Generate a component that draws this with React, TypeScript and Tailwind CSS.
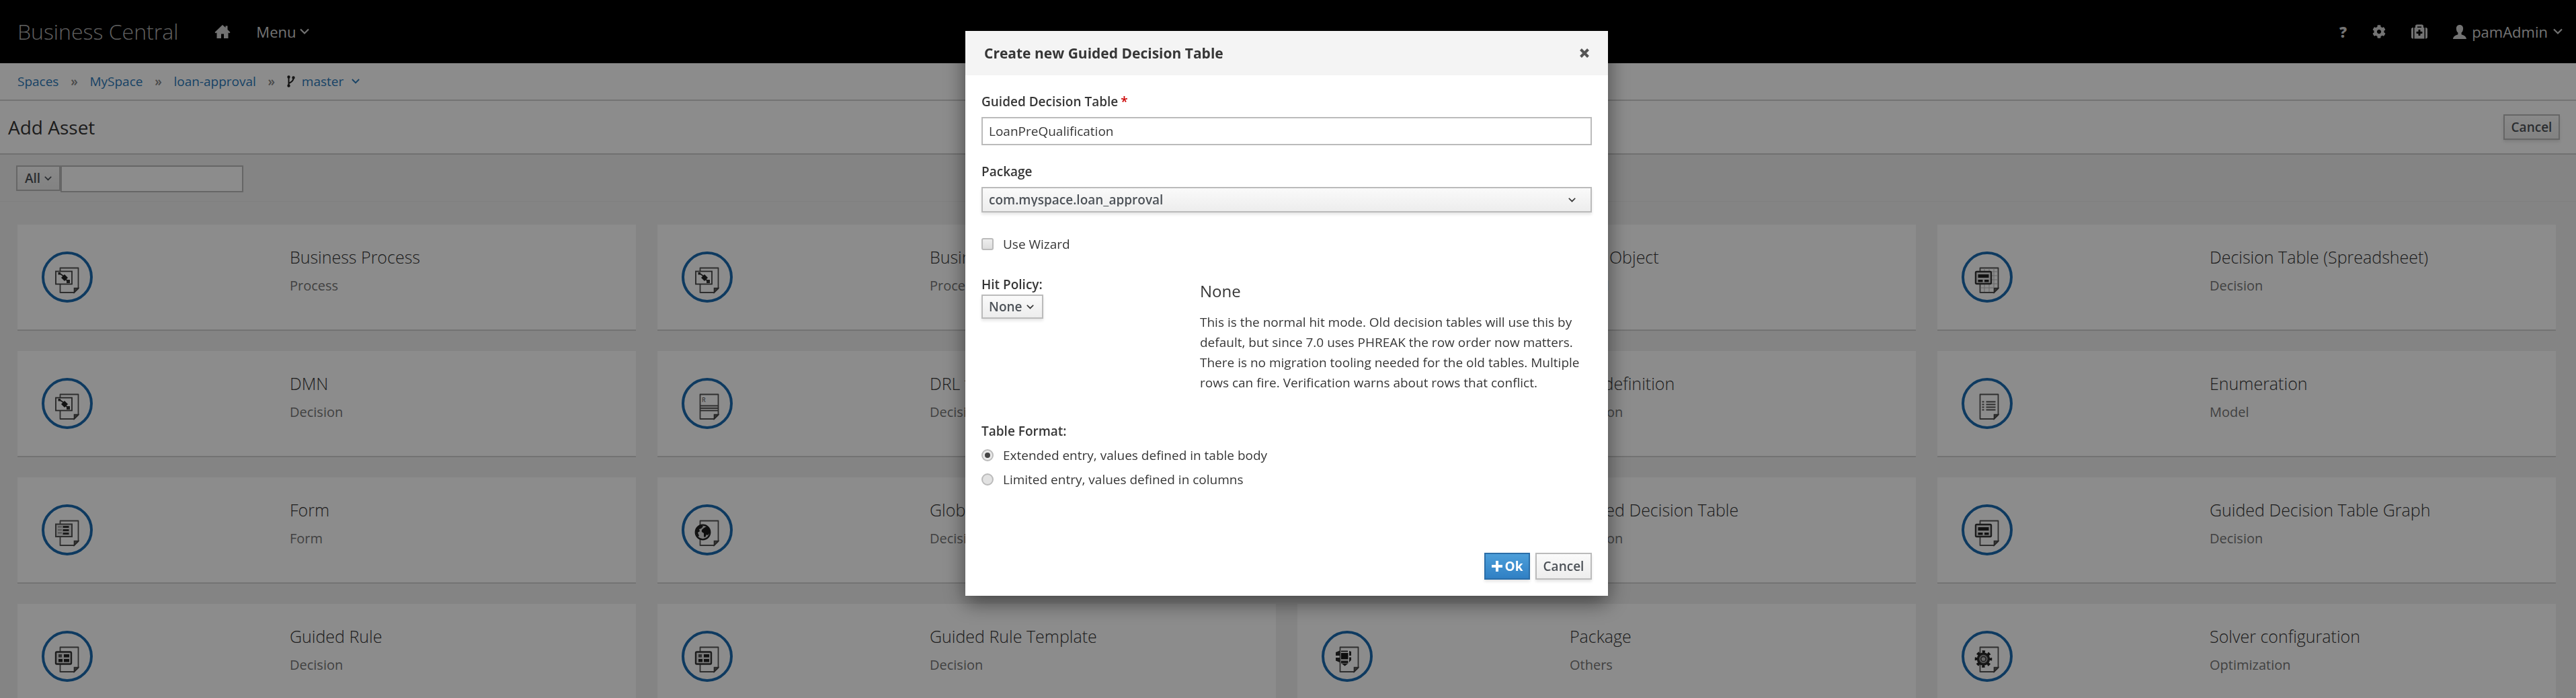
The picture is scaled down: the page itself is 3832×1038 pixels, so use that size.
import type { ReactNode } from 'react';
import { FaCog, FaMedkit } from 'react-icons/fa';

type IconKind = 'process' | 'rule' | 'table' | 'sheet' | 'list' | 'drl' | 'form' | 'globe' | 'package' | 'gear';

const assets: { title: string; kind: string; icon: IconKind }[] = [
  { title: 'Business Process', kind: 'Process', icon: 'process' },
  { title: 'Business Process (legacy)', kind: 'Process', icon: 'process' },
  { title: 'Data Object', kind: 'Model', icon: 'list' },
  { title: 'Decision Table (Spreadsheet)', kind: 'Decision', icon: 'sheet' },
  { title: 'DMN', kind: 'Decision', icon: 'process' },
  { title: 'DRL file', kind: 'Decision', icon: 'drl' },
  { title: 'DSL definition', kind: 'Decision', icon: 'drl' },
  { title: 'Enumeration', kind: 'Model', icon: 'list' },
  { title: 'Form', kind: 'Form', icon: 'form' },
  { title: 'Global Variable(s)', kind: 'Decision', icon: 'globe' },
  { title: 'Guided Decision Table', kind: 'Decision', icon: 'table' },
  { title: 'Guided Decision Table Graph', kind: 'Decision', icon: 'table' },
  { title: 'Guided Rule', kind: 'Decision', icon: 'rule' },
  { title: 'Guided Rule Template', kind: 'Decision', icon: 'rule' },
  { title: 'Package', kind: 'Others', icon: 'package' },
  { title: 'Solver configuration', kind: 'Optimization', icon: 'gear' },
];

const glyphs: Record<IconKind, ReactNode> = {
  process: (
    <>
      <rect x="21" y="29.5" width="24" height="19" fill="#fff" stroke="#444" strokeWidth="1.8" />
      <path d="M26 32 33 37M34 40 40 45" stroke="#333" strokeWidth="1.8" />
      <rect x="24.5" y="31" width="3.5" height="3.5" fill="#333" />
      <path d="M34 34 39 39 34 44 29 39Z" fill="#222" />
      <rect x="37" y="42" width="5" height="5" fill="#333" />
    </>
  ),
  rule: (
    <>
      <rect x="21" y="31.5" width="23" height="18" rx="1.5" fill="#ddd" stroke="#333" strokeWidth="2.4" />
      <rect x="25" y="35" width="5" height="4.5" fill="#555" />
      <rect x="33" y="35" width="8" height="4.5" fill="#222" />
      <rect x="25" y="42" width="6" height="4.5" fill="#222" />
      <rect x="33" y="42" width="8" height="4.5" fill="#222" />
    </>
  ),
  table: (
    <>
      <rect x="21" y="30" width="23" height="18" rx="1.5" fill="#ddd" stroke="#333" strokeWidth="2.4" />
      <rect x="24.5" y="34" width="16" height="5" fill="#222" />
      <rect x="24.5" y="42" width="7" height="3.5" fill="#222" />
      <rect x="34" y="42" width="6.5" height="3.5" fill="#222" />
    </>
  ),
  sheet: (
    <>
      <path d="M28 30H54M28 36H54M28 42H54M28 48H54M28 54H48M34 25V60M41 25V60M48 25V54" stroke="#bbb" strokeWidth="1" />
      <rect x="21" y="30" width="23" height="18" rx="1.5" fill="#ddd" stroke="#333" strokeWidth="2.4" />
      <rect x="24.5" y="34" width="16" height="5" fill="#222" />
      <rect x="24.5" y="42" width="7" height="3.5" fill="#222" />
      <rect x="34" y="42" width="6.5" height="3.5" fill="#222" />
    </>
  ),
  list: (
    <path
      d="M30.5 35.5h3M30.5 39.5h3M30.5 43.5h3M30.5 47.5h3M36.5 35.5h14M36.5 39.5h14M36.5 43.5h14M36.5 47.5h14"
      stroke="#555"
      strokeWidth="2"
    />
  ),
  drl: (
    <>
      <text x="30" y="36" fontSize="9" fontFamily="Open Sans" fill="#444">R</text>
      <path d="M28 41.5H54M28 45H54M28 48.5H54" stroke="#555" strokeWidth="1.8" />
    </>
  ),
  form: (
    <>
      <rect x="21" y="29.5" width="24" height="18.5" fill="#ddd" stroke="#555" strokeWidth="2" />
      <path d="M24 33.5h6M24 38h6M24 42.5h6" stroke="#888" strokeWidth="1.5" />
      <path d="M31.5 33.5h9M31.5 38.5h9M31.5 43.5h9" stroke="#333" strokeWidth="3" />
    </>
  ),
  globe: (
    <>
      <circle cx="31.5" cy="41.5" r="10.8" fill="#ddd" stroke="#222" strokeWidth="2.2" />
      <path d="M22 38q2-6 8-7l2 2-3 3-3 1 1 3-3 2 2 5-2 1q-3-4-2-10Z" fill="#222" />
      <path d="M32 36q3-3 7-3 3 3 3 9l-3 4-2-1-2 4-2-1 0-5-3-2q-1-3 2-5Z" fill="#1a1a1a" />
    </>
  ),
  package: (
    <>
      <path d="M21 32l6-2.5v7.5h-6ZM21 40h6v7l-6-2.5ZM30 49h9l-4.500 3.500ZM41 30l3 1v6h-3ZM41 39.500h3v4l-3 3.500Z" fill="#2a2a2a" />
      <path d="M29 30.500h10" stroke="#2a2a2a" strokeWidth="1.800" />
      <rect x="29" y="33" width="10.500" height="9.500" fill="#1a1a1a" />
      <rect x="29" y="44.500" width="10.500" height="4" fill="#2a2a2a" />
    </>
  ),
  gear: (
    <>
      <circle cx="32.500" cy="42" r="8" fill="#999" stroke="#2a2a2a" strokeWidth="3.500" />
      <circle cx="32.500" cy="42" r="10.800" fill="none" stroke="#222" strokeWidth="4" strokeDasharray="4.200 4.282" strokeDashoffset="2.100" />
      <circle cx="32.500" cy="42" r="3.600" fill="#bbb" stroke="#333" strokeWidth="1.500" />
    </>
  ),
};

function AssetIcon({ kind }: { kind: IconKind }) {
  return (
    <svg viewBox="0 0 76 76" fill="none" className="size-[76px] shrink-0" aria-hidden="true">
      <circle cx="38" cy="38" r="36" stroke="#1a6aaf" strokeWidth="4" />
      <path d="M27.5 24.5H54.5V55L48 61H27.5Z" stroke="#555" strokeWidth="1.8" strokeLinejoin="round" />
      <path d="M54.5 54.5H48.5V61Z" fill="#666" stroke="#444" strokeWidth="1.6" />
      {glyphs[kind]}
    </svg>
  );
}

function Caret({ className }: { className: string }) {
  return (
    <svg viewBox="0 0 14 14" className={className} fill="none" stroke="currentColor" strokeWidth="2.2" aria-hidden="true">
      <path d="M1 3.500 7 9.500 13 3.500" />
    </svg>
  );
}

function HomeIcon() {
  return (
    <svg viewBox="0 0 24 20" className="h-5 w-6" fill="currentColor" aria-hidden="true">
      <path d="M12 0 16.500 4V1.500H19.500V7L23.500 11 22 12.500 20.500 11.500V20H14V13.500H10V20H3.500V11.500L2 12.500.5 11Z" />
    </svg>
  );
}

function UserIcon() {
  return (
    <svg viewBox="0 0 20 21" className="h-[21px] w-5" fill="currentColor" aria-hidden="true">
      <path d="M10 0C13.300 0 15.300 2.300 15.100 5.800 15 8.500 14.200 10.300 12.600 11.500V14.300C16 15.600 19.500 16.500 20 21H0C.5 16.500 4 15.600 7.400 14.300V11.500C5.800 10.300 5 8.500 4.900 5.800 4.700 2.300 6.700 0 10 0Z" />
    </svg>
  );
}

function BranchIcon() {
  return (
    <svg viewBox="0 0 12 18" className="h-[18px] w-3" fill="none" stroke="#222" strokeWidth="2" aria-hidden="true">
      <path d="M2.500 2V16M2.500 12Q9.500 9 9.500 4" />
      <circle cx="2.500" cy="2.500" r="1.200" />
      <circle cx="2.500" cy="15.500" r="1.200" />
      <circle cx="9.500" cy="3.500" r="1.200" />
    </svg>
  );
}

const buttonLook = 'border-2 border-[#bbb] bg-linear-to-b from-[#fafafa] to-[#ededed] text-[19px] font-semibold text-[#4d5258]';
const dropShadow = 'shadow-[0_3px_4px_rgba(0,0,0,0.1)]';

function TopBar() {
  return (
    <header className="flex h-[94px] items-center justify-between bg-black pr-5 pl-[26px] text-[22px] text-[#d1d1d1]">
      <div className="flex items-center">
        <a href="#" className="mr-[54px] text-[32px] font-light text-[#b0b0b0]">Business Central</a>
        <a href="#" aria-label="Home" className="mr-[38px]"><HomeIcon /></a>
        <button type="button" className="flex items-center gap-1.5">Menu <Caret className="size-[14px]" /></button>
      </div>
      <div className="flex items-center gap-[38px]">
        <button type="button" aria-label="Help" className="font-extrabold">?</button>
        <button type="button" aria-label="Settings"><FaCog className="size-5" /></button>
        <button type="button" aria-label="Support"><FaMedkit className="size-6" /></button>
        <button type="button" className="flex items-center gap-2">
          <UserIcon />
          <span>pamAdmin</span>
          <Caret className="size-[14px]" />
        </button>
      </div>
    </header>
  );
}

function Breadcrumb() {
  const links = ['Spaces', 'MySpace', 'loan-approval'];
  return (
    <nav aria-label="Breadcrumb" className="flex h-14 items-center border-b-2 border-[#d1d1d1] bg-white pl-[26px] text-[19px] text-[#2b79b9]">
      {links.map((link) => (
        <span key={link} className="flex items-center">
          <a href="#">{link}</a>
          <span className="w-[46px] text-center font-semibold text-[#888]">»</span>
        </span>
      ))}
      <BranchIcon />
      <button type="button" className="ml-2.5 flex items-center gap-3">master <Caret className="size-3" /></button>
    </nav>
  );
}

function NewTableDialog() {
  return (
    <div className="fixed inset-0 flex items-start justify-center bg-black/45 pt-[46px] pr-1">
      <form role="dialog" aria-labelledby="dialog-title" className="w-full max-w-[956px] bg-white text-[19px] leading-[30px] text-[#363636] shadow-[0_10px_30px_rgba(0,0,0,0.5)]">
        <div className="flex h-[66px] items-center justify-between bg-[#f4f4f4] px-7">
          <h2 id="dialog-title" className="text-[21px] font-bold">Create new Guided Decision Table</h2>
          <button type="button" aria-label="Close" className="text-[#555]">
            <svg viewBox="0 0 14 14" className="size-[14px]" stroke="currentColor" strokeWidth="4" aria-hidden="true"><path d="M1.500 1.500 12.500 12.500M12.500 1.500 1.500 12.500" /></svg>
          </button>
        </div>
        <div className="p-6">
          <label htmlFor="table-name" className="block font-semibold">
            Guided Decision Table<span className="ml-1 text-[#c00]">*</span>
          </label>
          <input id="table-name" defaultValue="LoanPreQualification" className="mt-2 block h-[42px] w-full border-2 border-[#bbb] px-[9px]" />
          <label htmlFor="package" className="mt-6 block font-semibold">Package</label>
          <div className="relative mt-2">
            <select id="package" className={`${buttonLook} ${dropShadow} block h-[38px] w-full appearance-none px-[9px] leading-none`}>
              <option>com.myspace.loan_approval</option>
            </select>
            <Caret className="pointer-events-none absolute top-[14px] right-6 size-[11px]" />
          </div>
          <label className="mt-8 flex items-center gap-3.5">
            <input type="checkbox" className="size-[18px] appearance-none rounded-[3px] border-2 border-[#bbb] bg-linear-to-b from-[#eee] to-[#ddd]" />
            Use Wizard
          </label>
          <div className="mt-[30px] grid h-[186px] grid-cols-[325px_1fr]">
            <div>
              <label htmlFor="hit-policy" className="block font-semibold">Hit Policy:</label>
              <div className="relative w-[92px]">
                <select id="hit-policy" className={`${buttonLook} ${dropShadow} block h-9 w-full appearance-none px-[9px] leading-none`}>
                  <option>None</option>
                </select>
                <Caret className="pointer-events-none absolute top-[13px] right-3.5 size-[11px]" />
              </div>
            </div>
            <div>
              <h3 className="mt-2.5 text-[24px]">None</h3>
              <p className="mt-4">
                This is the normal hit mode. Old decision tables will use this by default, but since 7.0 uses PHREAK the row order now matters. There is no migration tooling needed for the old tables. Multiple rows can fire. Verification warns about rows that conflict.
              </p>
            </div>
          </div>
          <fieldset className="mt-8">
            <legend className="font-semibold">Table Format:</legend>
            <div className="mt-1.5 flex flex-col gap-1.5">
              <label className="flex items-center gap-3.5">
                <input type="radio" name="format" defaultChecked className="grid size-[18px] appearance-none place-items-center rounded-full border-2 border-[#bbb] bg-[#eaeaea] before:size-2 before:rounded-full checked:before:bg-[#444]" />
                Extended entry, values defined in table body
              </label>
              <label className="flex items-center gap-3.5">
                <input type="radio" name="format" className="size-[18px] appearance-none rounded-full border-2 border-[#bbb] bg-[#e2e2e2]" />
                Limited entry, values defined in columns
              </label>
            </div>
          </fieldset>
          <div className="mt-[94px] flex justify-end gap-2">
            <button type="button" className={`${dropShadow} flex h-10 w-[68px] items-center justify-center gap-1 border-2 border-[#2b6ea8] bg-linear-to-b from-[#4c9ed9] to-[#3080c4] font-bold text-white`}>
              <svg viewBox="0 0 16 16" className="size-4" stroke="currentColor" strokeWidth="4" aria-hidden="true"><path d="M8 0V16M0 8H16" /></svg>
              Ok
            </button>
            <button type="button" className={`${buttonLook} ${dropShadow} h-10 w-[84px]`}>Cancel</button>
          </div>
        </div>
      </form>
    </div>
  );
}

export default function App() {
  return (
    <div className="h-screen overflow-hidden bg-[#f1f1f1] font-['Open_Sans',sans-serif] text-[#363636]">
      <TopBar />
      <Breadcrumb />
      <div className="flex h-20 items-center justify-between border-b-2 border-[#ccc] bg-white pr-6 pl-3">
        <h1 className="text-[28px]">Add Asset</h1>
        <button type="button" className={`${buttonLook} ${dropShadow} h-[38px] w-[84px]`}>Cancel</button>
      </div>
      <div className="flex h-[70px] items-start border-b border-[#e8e8e8] pt-4 pl-6">
        <button type="button" className={`${buttonLook} flex h-[38px] w-[66px] items-center justify-center gap-1.5`}>All <Caret className="size-[11px]" /></button>
        <input aria-label="Filter assets" className="h-10 w-[272px] border-2 border-[#bbb] bg-white" />
      </div>
      <main className="grid grid-cols-4 gap-x-8 gap-y-[30px] pt-[34px] pr-[30px] pl-[26px]">
        {assets.map((asset) => (
          <article key={asset.title} className="grid h-[158px] grid-cols-[369px_1fr] border-b-2 border-[#d1d1d1] bg-white pt-10 pl-9">
            <AssetIcon kind={asset.icon} />
            <div className="-mt-2.5">
              <h2 className="text-[25px] leading-9 font-light">{asset.title}</h2>
              <p className="mt-2.5 text-[20px] leading-[30px] text-[#777]">{asset.kind}</p>
            </div>
          </article>
        ))}
      </main>
      <NewTableDialog />
    </div>
  );
}
